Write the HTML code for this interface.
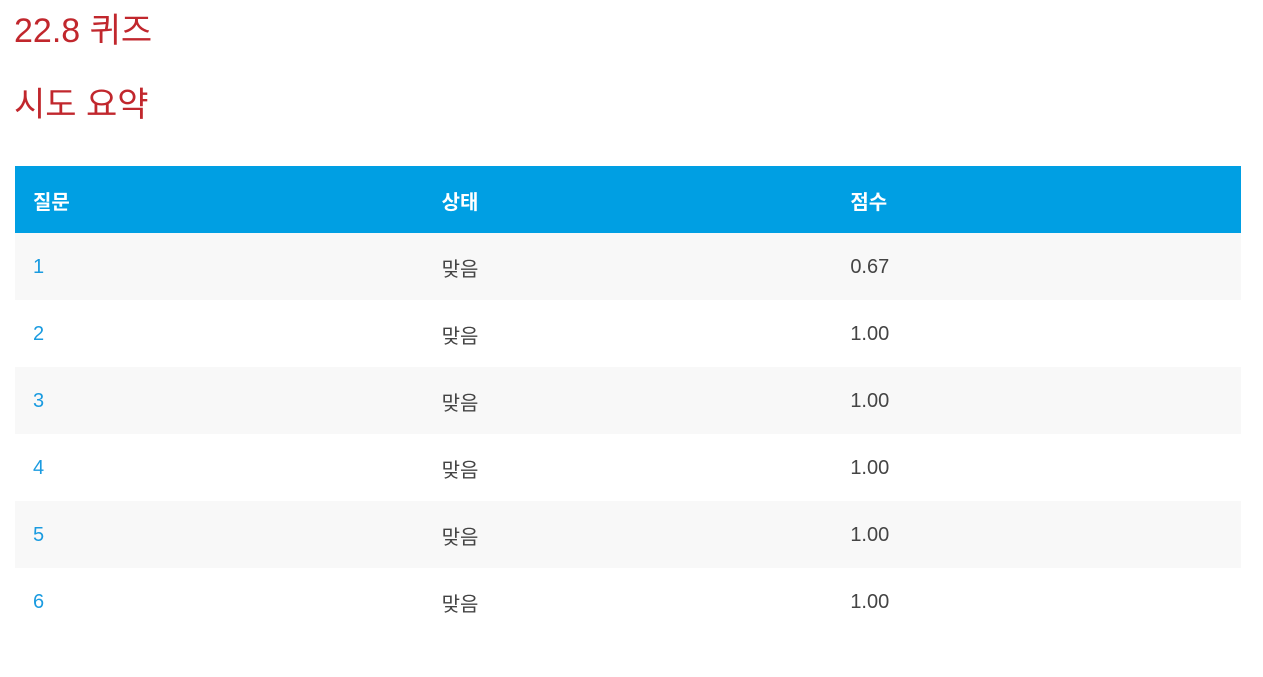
<!DOCTYPE html>
<html><head><meta charset="utf-8"><style>
body{margin:0;background:#fff;font-family:"Liberation Sans","Noto Sans CJK KR",sans-serif;}
h1,h2{color:#c1272d;font-weight:normal;margin:0;position:absolute;left:14px;font-size:34px;line-height:40px;}
h1{top:11px}
h2{top:85px}
table{position:absolute;left:15px;top:166px;width:1226px;border-collapse:collapse;font-size:20px;}
th{background:#009fe3;color:#fff;text-align:left;font-weight:bold;height:67px;padding:2px 18px 0;width:372px;box-sizing:border-box}
td{height:67px;padding:2px 18px 0;color:#444;box-sizing:border-box}
tr:nth-child(odd) td{background:#f8f8f8}
td a{color:#1a9be0;text-decoration:none}
</style></head><body>
<h1>22.8 퀴즈</h1>
<h2>시도 요약</h2>
<table>
<thead><tr><th>질문</th><th>상태</th><th>점수</th></tr></thead>
<tbody>
<tr><td><a>1</a></td><td>맞음</td><td>0.67</td></tr>
<tr><td><a>2</a></td><td>맞음</td><td>1.00</td></tr>
<tr><td><a>3</a></td><td>맞음</td><td>1.00</td></tr>
<tr><td><a>4</a></td><td>맞음</td><td>1.00</td></tr>
<tr><td><a>5</a></td><td>맞음</td><td>1.00</td></tr>
<tr><td><a>6</a></td><td>맞음</td><td>1.00</td></tr>
</tbody></table>
</body></html>
